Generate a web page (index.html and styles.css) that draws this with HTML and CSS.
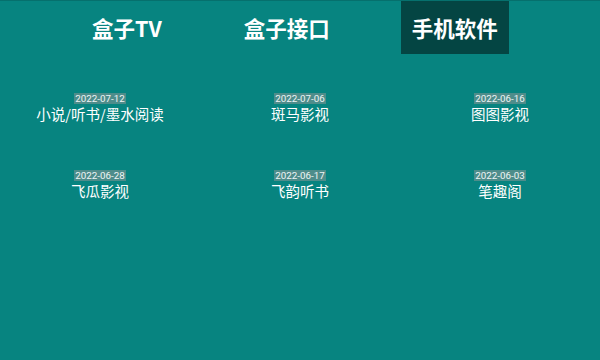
FILE: index.html
```html
<!DOCTYPE html>
<html lang="zh-CN">
<head>
  <meta charset="UTF-8" />
  <meta name="viewport" content="width=device-width,initial-scale=1.0">
  <title>手机软件</title>
  <link rel="stylesheet" href="styles.css">
</head>
<body>
  <div class="tabs">
    <div class="tab">盒子TV</div>
    <div class="tab">盒子接口</div>
    <div class="tab active">手机软件</div>
  </div>

  <div class="grid">
    <div class="item"><span class="date">2022-07-12</span><div class="name">小说/听书/墨水阅读</div></div>
    <div class="item"><span class="date">2022-07-06</span><div class="name">斑马影视</div></div>
    <div class="item"><span class="date">2022-06-16</span><div class="name">图图影视</div></div>
    <div class="item"><span class="date">2022-06-28</span><div class="name">飞瓜影视</div></div>
    <div class="item"><span class="date">2022-06-17</span><div class="name">飞韵听书</div></div>
    <div class="item"><span class="date">2022-06-03</span><div class="name">笔趣阁</div></div>
  </div>
</body>
</html>
```

FILE: styles.css
```css
html, body {
  margin: 0;
  padding: 0;
  height: 100vh;
  overflow: hidden;
  background-color: #078480;
  color: #fff;
  font-family: "Noto Sans CJK SC", "Noto Sans", sans-serif;
}

.tabs {
  display: flex;
  gap: 60px;
  padding-left: 81px;
  border-top: 1px solid #06706d;
}

.tab {
  padding: 0 11px;
  height: 53px;
  line-height: 53px;
  font-size: 21.5px;
  font-weight: bold;
}

.tab.active {
  background-color: #044543;
}

.grid {
  display: grid;
  grid-template-columns: repeat(3, 1fr);
  row-gap: 46px;
  margin-top: 39px;
}

.item {
  text-align: center;
}

.date {
  display: table;
  margin: 0 auto;
  font-family: Roboto, "Liberation Sans", sans-serif;
  font-size: 9.8px;
  line-height: 11px;
  padding: 0 1px;
  color: #eef5f5;
  background-color: rgba(150, 150, 150, 0.5);
}

.name {
  font-size: 14.5px;
  line-height: 20px;
}
```
